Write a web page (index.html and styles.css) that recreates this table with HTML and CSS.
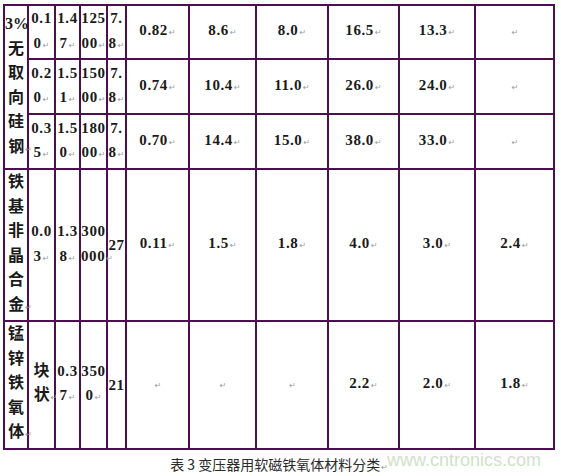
FILE: index.html
```html
<!DOCTYPE html>
<html lang="zh">
<head>
<meta charset="utf-8">
<title>表3 变压器用软磁铁氧体材料分类</title>
<link rel="stylesheet" href="styles.css">
</head>
<body>
<div class="page">
  <table class="grid">
    <colgroup>
      <col class="c1"><col class="c2"><col class="c3"><col class="c4"><col class="c5">
      <col class="c6"><col class="c7"><col class="c8"><col class="c9"><col class="c10"><col class="c11">
    </colgroup>
    <tbody>
      <tr class="r1">
        <td rowspan="3" class="name">3%<br>无<br>取<br>向<br>硅<br>钢<span class="ret">↵</span></td>
        <td class="num">0.1<br>0<span class="ret">↵</span></td>
        <td class="num">1.4<br>7<span class="ret">↵</span></td>
        <td class="num">125<br>00<span class="ret">↵</span></td>
        <td class="num">7.<br>8<span class="ret">↵</span></td>
        <td class="num">0.82<span class="ret">↵</span></td>
        <td class="num">8.6<span class="ret">↵</span></td>
        <td class="num">8.0<span class="ret">↵</span></td>
        <td class="num">16.5<span class="ret">↵</span></td>
        <td class="num">13.3<span class="ret">↵</span></td>
        <td class="num empty"><span class="ret">↵</span></td>
      </tr>
      <tr class="r2">
        <td class="num">0.2<br>0<span class="ret">↵</span></td>
        <td class="num">1.5<br>1<span class="ret">↵</span></td>
        <td class="num">150<br>00<span class="ret">↵</span></td>
        <td class="num">7.<br>8<span class="ret">↵</span></td>
        <td class="num">0.74<span class="ret">↵</span></td>
        <td class="num">10.4<span class="ret">↵</span></td>
        <td class="num">11.0<span class="ret">↵</span></td>
        <td class="num">26.0<span class="ret">↵</span></td>
        <td class="num">24.0<span class="ret">↵</span></td>
        <td class="num empty"><span class="ret">↵</span></td>
      </tr>
      <tr class="r3">
        <td class="num">0.3<br>5<span class="ret">↵</span></td>
        <td class="num">1.5<br>0<span class="ret">↵</span></td>
        <td class="num">180<br>00<span class="ret">↵</span></td>
        <td class="num">7.<br>8<span class="ret">↵</span></td>
        <td class="num">0.70<span class="ret">↵</span></td>
        <td class="num">14.4<span class="ret">↵</span></td>
        <td class="num">15.0<span class="ret">↵</span></td>
        <td class="num">38.0<span class="ret">↵</span></td>
        <td class="num">33.0<span class="ret">↵</span></td>
        <td class="num empty"><span class="ret">↵</span></td>
      </tr>
      <tr class="r4">
        <td class="name">铁<br>基<br>非<br>晶<br>合<br>金<span class="ret">↵</span></td>
        <td class="num">0.0<br>3<span class="ret">↵</span></td>
        <td class="num">1.3<br>8<span class="ret">↵</span></td>
        <td class="num">300<br>000<span class="ret">↵</span></td>
        <td class="num">27</td>
        <td class="num">0.11<span class="ret">↵</span></td>
        <td class="num">1.5<span class="ret">↵</span></td>
        <td class="num">1.8<span class="ret">↵</span></td>
        <td class="num">4.0<span class="ret">↵</span></td>
        <td class="num">3.0<span class="ret">↵</span></td>
        <td class="num">2.4<span class="ret">↵</span></td>
      </tr>
      <tr class="r5">
        <td class="name">锰<br>锌<br>铁<br>氧<br>体<span class="ret">↵</span></td>
        <td class="name">块<br>状<span class="ret">↵</span></td>
        <td class="num">0.3<br>7<span class="ret">↵</span></td>
        <td class="num">350<br>0<span class="ret">↵</span></td>
        <td class="num">21</td>
        <td class="num empty"><span class="ret">↵</span></td>
        <td class="num empty"><span class="ret">↵</span></td>
        <td class="num empty"><span class="ret">↵</span></td>
        <td class="num">2.2<span class="ret">↵</span></td>
        <td class="num">2.0<span class="ret">↵</span></td>
        <td class="num">1.8<span class="ret">↵</span></td>
      </tr>
    </tbody>
  </table>
  <p class="caption">表 3 变压器用软磁铁氧体材料分类<span class="ret">↵</span></p>
  <div class="watermark">www.cntronics.com</div>
</div>
</body>
</html>
```
FILE: styles.css
```css
html, body {
  margin: 0;
  padding: 0;
  background: #ffffff;
}

.page {
  position: relative;
  width: 561px;
  height: 476px;
  padding: 4px 0 0 3px;
  box-sizing: border-box;
  overflow: hidden;
}

.grid {
  border-collapse: collapse;
  table-layout: fixed;
  width: 552px;
}

.grid td {
  border: 2px solid #4e0f50;
  padding: 0;
  text-align: center;
  vertical-align: middle;
  line-height: 24.5px;
  color: #1a1a1a;
  white-space: nowrap;
  overflow: visible;
}

.c1 { width: 24px; }
.c2 { width: 27px; }
.c3 { width: 25px; }
.c4 { width: 27px; }
.c5 { width: 19px; }
.c6 { width: 63px; }
.c7 { width: 67px; }
.c8 { width: 72px; }
.c9 { width: 71px; }
.c10 { width: 76px; }
.c11 { width: 79px; }

.r1 { height: 52px; }
.r2 { height: 55px; }
.r3 { height: 55px; }
.r4 { height: 152px; }
.r5 { height: 126px; }

.num {
  font-family: "Liberation Serif", "Noto Sans CJK SC", serif;
  font-weight: 700;
  font-size: 15px;
  letter-spacing: 0.6px;
}

.name {
  font-family: "Liberation Serif", "Noto Sans CJK SC", serif;
  font-weight: 700;
  font-size: 16px;
}

.name .ret {
  margin-right: -8px;
}

.empty {
  text-align: right;
  padding-right: 18px;
}

.ret {
  font-family: "DejaVu Sans", sans-serif;
  font-weight: 400;
  font-size: 8px;
  color: #9a9a9a;
  letter-spacing: 0;
  margin-left: 1px;
}

.caption {
  margin: 5px 0 0 0;
  width: 552px;
  text-align: center;
  font-family: "Noto Sans CJK SC", sans-serif;
  font-weight: 400;
  font-size: 14px;
  line-height: 18px;
  color: #2a2a2a;
}

.watermark {
  position: absolute;
  left: 387px;
  top: 449px;
  font-family: "Liberation Sans", Arial, sans-serif;
  font-size: 18px;
  line-height: 22px;
  color: #cfe2c9;
}
```
